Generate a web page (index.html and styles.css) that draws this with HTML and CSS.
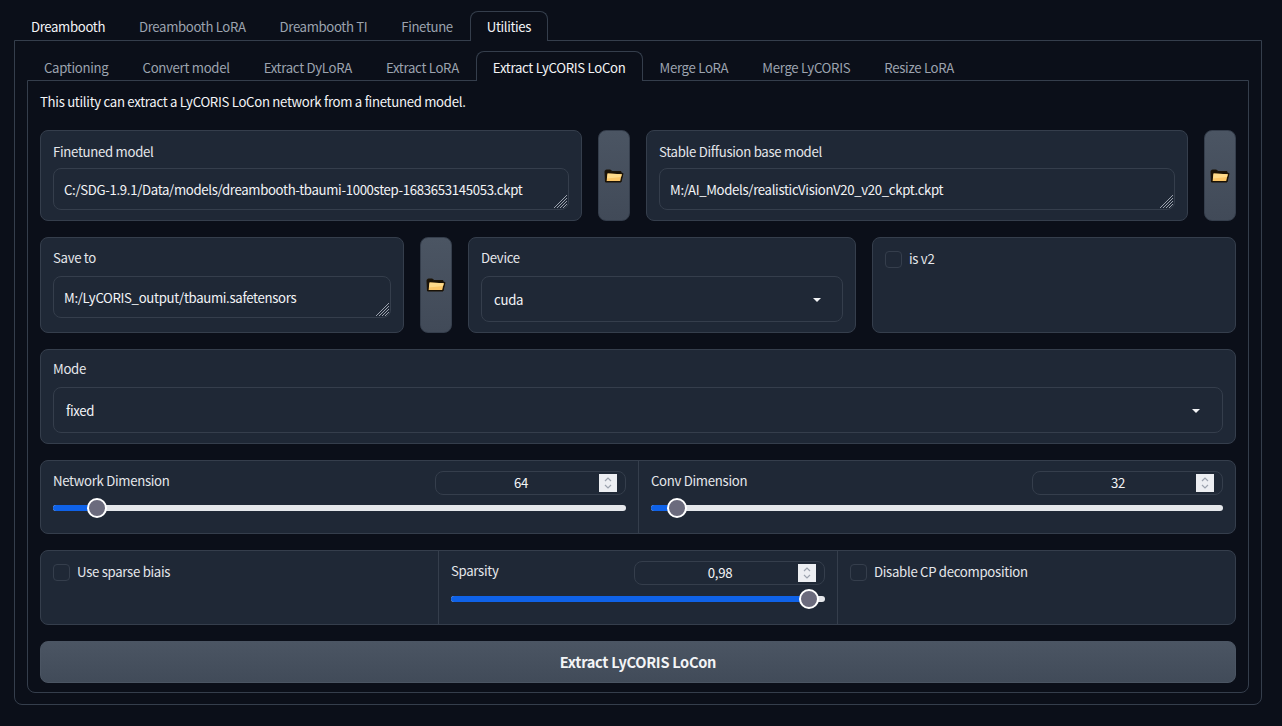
FILE: index.html
```html
<!DOCTYPE html>
<html lang="en">
<head>
<meta charset="utf-8">
<title>Extract LyCORIS LoCon</title>
<link rel="stylesheet" href="styles.css">
</head>
<body>
<svg class="defs" width="0" height="0" aria-hidden="true">
  <symbol id="folder" viewBox="0 0 20 14">
    <path d="M1.5 13 L1 2.5 Q1 1 2.5 1 L6.5 1 L8 2.6 L17 2.6 L17.2 4.4 L19 4.4 L17 13 Z" fill="#1a1206" stroke="#1a1206" stroke-width="1" stroke-linejoin="round"/>
    <path d="M2.6 12 L3.6 4.6 L17.8 5.2 L16.2 12 Z" fill="#fcc768"/>
    <path d="M2.9 9.5 L3.6 4.6 L17.8 5.2 L17 8 Z" fill="#ffdb8a"/>
  </symbol>
</svg>
<nav class="tabs tabs-top">
  <span class="tab tab-current">Dreambooth</span>
  <span class="tab">Dreambooth LoRA</span>
  <span class="tab">Dreambooth TI</span>
  <span class="tab">Finetune</span>
  <span class="tab tab-active">Utilities</span>
</nav>
<section class="panel panel-outer">
  <nav class="tabs tabs-sub">
    <span class="tab">Captioning</span>
    <span class="tab">Convert model</span>
    <span class="tab">Extract DyLoRA</span>
    <span class="tab">Extract LoRA</span>
    <span class="tab tab-active">Extract LyCORIS LoCon</span>
    <span class="tab">Merge LoRA</span>
    <span class="tab">Merge LyCORIS</span>
    <span class="tab">Resize LoRA</span>
  </nav>
  <section class="panel panel-inner">
    <p class="desc">This utility can extract a LyCORIS LoCon network from a finetuned model.</p>

    <div class="row row-paths">
      <div class="box grow">
        <div class="label">Finetuned model</div>
        <div class="textarea">C:/SDG-1.9.1/Data/models/dreambooth-tbaumi-1000step-1683653145053.ckpt<svg class="grip" viewBox="0 0 16 16"><path d="M15 2 L2 15 M15 5 L5 15 M15 8 L8 15 M15 11 L11 15" stroke="#9aa1ad" stroke-width="1"/></svg></div>
      </div>
      <button class="folder-btn"><svg class="folder" viewBox="0 0 20 14"><use href="#folder"/></svg></button>
      <div class="box grow">
        <div class="label">Stable Diffusion base model</div>
        <div class="textarea">M:/AI_Models/realisticVisionV20_v20_ckpt.ckpt<svg class="grip" viewBox="0 0 16 16"><path d="M15 2 L2 15 M15 5 L5 15 M15 8 L8 15 M15 11 L11 15" stroke="#9aa1ad" stroke-width="1"/></svg></div>
      </div>
      <button class="folder-btn"><svg class="folder" viewBox="0 0 20 14"><use href="#folder"/></svg></button>
    </div>

    <div class="row row-save">
      <div class="box box-save">
        <div class="label">Save to</div>
        <div class="textarea">M:/LyCORIS_output/tbaumi.safetensors<svg class="grip" viewBox="0 0 16 16"><path d="M15 2 L2 15 M15 5 L5 15 M15 8 L8 15 M15 11 L11 15" stroke="#9aa1ad" stroke-width="1"/></svg></div>
      </div>
      <button class="folder-btn"><svg class="folder" viewBox="0 0 20 14"><use href="#folder"/></svg></button>
      <div class="box box-device">
        <div class="label">Device</div>
        <div class="select"><span>cuda</span><i class="caret"></i></div>
      </div>
      <div class="box box-v2">
        <label class="check"><i class="checkbox"></i>is v2</label>
      </div>
    </div>

    <div class="box box-mode">
      <div class="label">Mode</div>
      <div class="select select-wide"><span>fixed</span><i class="caret"></i></div>
    </div>

    <div class="box-group group-sliders">
      <div class="cell slider-cell">
        <div class="slider-head">
          <span class="label">Network Dimension</span>
          <div class="number"><span>64</span><i class="spin"><svg viewBox="0 0 18 18"><path d="M6 7 L9 4 L12 7 M6 11 L9 14 L12 11" fill="none" stroke="#9ca3af" stroke-width="1.2"/></svg></i></div>
        </div>
        <div class="track"><div class="fill" style="width:7.7%"></div><i class="thumb" style="left:7.7%"></i></div>
      </div>
      <div class="cell slider-cell">
        <div class="slider-head">
          <span class="label">Conv Dimension</span>
          <div class="number"><span>32</span><i class="spin"><svg viewBox="0 0 18 18"><path d="M6 7 L9 4 L12 7 M6 11 L9 14 L12 11" fill="none" stroke="#9ca3af" stroke-width="1.2"/></svg></i></div>
        </div>
        <div class="track"><div class="fill" style="width:4.6%"></div><i class="thumb" style="left:4.6%"></i></div>
      </div>
    </div>

    <div class="box-group group-sparse">
      <div class="cell check-cell">
        <label class="check"><i class="checkbox"></i>Use sparse biais</label>
      </div>
      <div class="cell slider-cell">
        <div class="slider-head">
          <span class="label">Sparsity</span>
          <div class="number"><span>0,98</span><i class="spin"><svg viewBox="0 0 18 18"><path d="M6 7 L9 4 L12 7 M6 11 L9 14 L12 11" fill="none" stroke="#9ca3af" stroke-width="1.2"/></svg></i></div>
        </div>
        <div class="track track-low"><div class="fill" style="width:95.7%"></div><i class="thumb" style="left:95.7%"></i></div>
      </div>
      <div class="cell check-cell">
        <label class="check"><i class="checkbox"></i>Disable CP decomposition</label>
      </div>
    </div>

    <button class="primary">Extract LyCORIS LoCon</button>
  </section>
</section>
</body>
</html>
```

FILE: styles.css
```css
* { box-sizing: border-box; }
html, body { margin: 0; height: 100%; }
body {
  background: #0b0f19;
  color: #e5e7eb;
  font-family: "Noto Sans CJK SC", "Source Sans Pro", "Noto Sans", sans-serif;
  font-size: 13.2px;
  letter-spacing: -0.3px;
  line-height: 20px;
  padding: 11px 20px 0 14px;
  overflow: hidden;
}
.defs { position: absolute; }

.tabs { display: flex; height: 30px; margin-bottom: -1px; position: relative; z-index: 1; }
.tabs-top { letter-spacing: -0.36px; }
.tab {
  padding: 0 16px;
  border: 1px solid transparent;
  border-bottom: 0;
  line-height: 30px;
  color: #9ca3af;
  white-space: nowrap;
}
.tabs-sub .tab { line-height: 31px; }
.tab-current { color: #f3f4f6; }
.tab-active {
  color: #f3f4f6;
  background: #0b0f19;
  border-color: #353e4c;
  border-radius: 8px 8px 0 0;
  height: 30px;
}

.panel { border: 1px solid #353e4c; border-radius: 0 0 8px 8px; }
.panel-outer { padding: 10px 12px 11px; height: 665px; }
.panel-inner {
  padding: 11px 12px 9px;
  display: flex;
  flex-direction: column;
  gap: 16px;
  height: 613px;
}
.desc { margin: 0; height: 22px; line-height: 19px; color: #f3f4f6; }

.row { display: flex; gap: 16px; }
.row-paths { height: 91px; }
.row-save { height: 96px; }
.grow { flex: 1 1 0; }

.box, .box-group {
  background: #1f2836;
  border: 1px solid #353e4c;
  border-radius: 8px;
}
.box { padding: 12px; min-width: 0; }
.row-paths .box { padding-top: 13px; }
.box-save { width: 364px; }
.box-device { width: 388px; }
.box-v2 { width: 364px; }
.box-mode { height: 95px; flex: none; padding-top: 11px; }

.label { line-height: 16px; color: #e5e7eb; }
.textarea, .select {
  position: relative;
  background: #1f2836;
  border: 1px solid #353e4c;
  border-radius: 8px;
  color: #f3f4f6;
  white-space: nowrap;
}
.box .label { margin-bottom: 9px; }
.row-paths .box .label { margin-bottom: 8px; }
.row-save .box .label { margin-bottom: 10px; }
.box-mode .label { margin-bottom: 10px; }
.textarea { height: 42px; padding: 11px 10px 0; line-height: 20px; letter-spacing: -0.33px; }
.grip { position: absolute; right: 0; bottom: 0; width: 16px; height: 16px; }
.select {
  height: 46px;
  display: flex;
  align-items: center;
  justify-content: space-between;
  padding: 2px 21px 0 12px;
}
.caret {
  width: 0; height: 0;
  border-left: 4px solid transparent;
  border-right: 4px solid transparent;
  border-top: 4px solid #f3f4f6;
}
.select-wide { padding-right: 22px; }

.folder-btn {
  width: 32px;
  padding: 0;
  flex: none;
  border: 1px solid #353e4c;
  border-radius: 8px;
  background: linear-gradient(to bottom, #4b5563, #414a58);
  display: flex;
  align-items: center;
  justify-content: center;
}
.folder { width: 20px; height: 14px; display: block; }

.check { display: flex; align-items: center; gap: 7px; line-height: 18px; color: #e5e7eb; }
.checkbox {
  width: 17px; height: 17px;
  flex: none;
  background: #1f2836;
  border: 1px solid #353e4c;
  border-radius: 4px;
}

.box-group { display: flex; flex: none; }
.group-sliders { height: 74px; }
.group-sparse { height: 75px; }
.cell { padding: 10px 12px 0; min-width: 0; border-left: 1px solid #353e4c; }
.cell:first-child { border-left: 0; }
.group-sliders .cell { flex: none; }
.group-sliders .cell:first-child { width: 597px; }
.group-sliders .cell:last-child { width: 597px; }
.group-sparse .cell { flex: none; }
.group-sparse .cell:nth-child(1) { width: 397px; padding-top: 12px; }
.group-sparse .cell:nth-child(2) { width: 399px; }
.group-sparse .cell:nth-child(3) { width: 398px; padding-top: 12px; }

.slider-head { display: flex; align-items: flex-start; justify-content: space-between; height: 24px; }
.slider-head .label { line-height: 20px; }
.number {
  width: 191px; height: 24px;
  position: relative;
  border: 1px solid #353e4c;
  border-radius: 8px;
  background: #1f2836;
  text-align: center;
  line-height: 21px;
  color: #f3f4f6;
}
.number span { display: block; padding-right: 19px; }
.spin {
  position: absolute;
  right: 8px; top: 2px;
  width: 18px; height: 18px;
  background: #eceef2;
  display: block;
}
.spin svg { display: block; width: 18px; height: 18px; }

.track {
  position: relative;
  height: 6px;
  margin-top: 10px;
  background: #e5e7eb;
  border-radius: 3px;
}
.track-low { margin-top: 11px; }
.fill { height: 100%; background: #0f62e8; border-radius: 3px 0 0 3px; }
.thumb {
  position: absolute;
  top: 3px;
  width: 20px; height: 20px;
  margin: -10px 0 0 -10px;
  background: #6b6b7d;
  border: 2px solid #fff;
  border-radius: 50%;
}

.primary {
  height: 42px;
  flex: none;
  border: 1px solid #4b5563;
  border-radius: 8px;
  background: linear-gradient(to bottom, #4b5563, #414b59);
  color: #f3f4f6;
  font: inherit;
  font-size: 14.6px;
  font-weight: 700;
  letter-spacing: -0.3px;
}
```
